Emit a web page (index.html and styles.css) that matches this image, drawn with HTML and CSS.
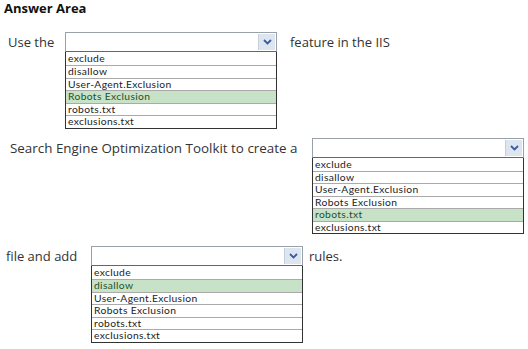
FILE: index.html
```html
<!DOCTYPE html>
<html lang="en">
<head>
  <meta charset="UTF-8">
  <title>Answer Area</title>
  <link rel="stylesheet" href="styles.css">
</head>
<body>

  <h3 class="title">Answer Area</h3>

  <div class="row row-one">
    <span class="label label-one">Use the</span>
    <div class="dropdown">
      <div class="dropdown-head">
        <span class="dropdown-btn">
          <svg width="9" height="6" viewBox="0 0 9 6"><path d="M1 1 L4.5 4.5 L8 1" fill="none" stroke="#3b5b9c" stroke-width="1.8"/></svg>
        </span>
      </div>
      <ul class="options">
        <li>exclude</li>
        <li>disallow</li>
        <li>User-Agent.Exclusion</li>
        <li class="selected">Robots Exclusion</li>
        <li>robots.txt</li>
        <li>exclusions.txt</li>
      </ul>
    </div>
    <span class="label after">feature in the IIS</span>
  </div>

  <div class="row row-two">
    <span class="label label-two">Search Engine Optimization Toolkit to create a</span>
    <div class="dropdown">
      <div class="dropdown-head">
        <span class="dropdown-btn">
          <svg width="9" height="6" viewBox="0 0 9 6"><path d="M1 1 L4.5 4.5 L8 1" fill="none" stroke="#3b5b9c" stroke-width="1.8"/></svg>
        </span>
      </div>
      <ul class="options">
        <li>exclude</li>
        <li>disallow</li>
        <li>User-Agent.Exclusion</li>
        <li>Robots Exclusion</li>
        <li class="selected">robots.txt</li>
        <li>exclusions.txt</li>
      </ul>
    </div>
  </div>

  <div class="row row-three">
    <span class="label label-three">file and add</span>
    <div class="dropdown">
      <div class="dropdown-head">
        <span class="dropdown-btn">
          <svg width="9" height="6" viewBox="0 0 9 6"><path d="M1 1 L4.5 4.5 L8 1" fill="none" stroke="#3b5b9c" stroke-width="1.8"/></svg>
        </span>
      </div>
      <ul class="options">
        <li>exclude</li>
        <li class="selected">disallow</li>
        <li>User-Agent.Exclusion</li>
        <li>Robots Exclusion</li>
        <li>robots.txt</li>
        <li>exclusions.txt</li>
      </ul>
    </div>
    <span class="label after">rules.</span>
  </div>

</body>
</html>
```

FILE: styles.css
```css
body {
  margin: 0;
  padding: 0;
  background-color: white;
  color: #222;
  font-family: "Open Sans", "Noto Sans", Arial, sans-serif;
}
.title {
  margin: 0;
  padding: 1px 0 0 4px;
  font-size: 13px;
  font-weight: bold;
  line-height: 15px;
  color: #111;
}
.row {
  display: flex;
  align-items: flex-start;
}
.row-one {
  margin-top: 16px;
}
.row-two {
  margin-top: 9px;
}
.row-three {
  margin-top: 12px;
}
.label {
  font-size: 13px;
  line-height: 20px;
  white-space: nowrap;
  color: #333;
}
.label-one {
  width: 57px;
  padding-left: 8px;
}
.label-two {
  width: 302px;
  padding-left: 10px;
  font-size: 13.4px;
}
.label-three {
  width: 85px;
  padding-left: 6px;
}
.after {
  padding-left: 13px;
}
.row-three .after {
  padding-left: 6px;
}
.dropdown {
  width: 212px;
}
.dropdown-head {
  height: 18px;
  border: 1px solid #9aa0a8;
  border-bottom-color: #666;
  display: flex;
  justify-content: flex-end;
  align-items: center;
  padding-right: 1px;
}
.dropdown-btn {
  width: 16px;
  height: 16px;
  background-color: #dde5f1;
  border-left: 1px solid #c5cfdd;
  display: flex;
  align-items: center;
  justify-content: center;
}
.options {
  list-style: none;
  margin: 0;
  padding: 0;
  border: 1px solid #333;
  border-top: none;
}
.options li {
  height: 11.5px;
  line-height: 11.5px;
  padding-left: 2px;
  font-family: Lato, "Open Sans", sans-serif;
  font-size: 10.3px;
  letter-spacing: 0.35px;
  color: #222;
  border-top: 1px solid #aaa;
}
.options li:first-child {
  border-top: none;
  height: 13px;
  line-height: 13px;
}
.options li.selected {
  background-color: #c8e2c8;
  color: #24502a;
}
```
